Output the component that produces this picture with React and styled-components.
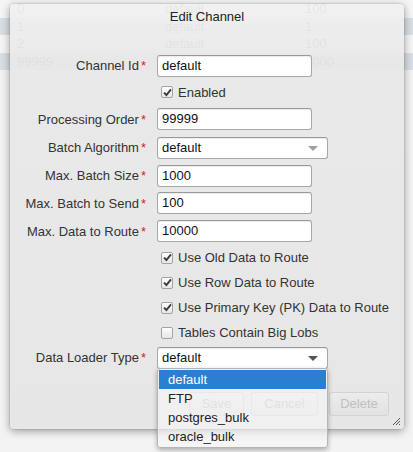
import React from "react";
import styled, { createGlobalStyle } from "styled-components";

const GlobalStyle = createGlobalStyle`
  html, body { margin: 0; padding: 0; background: #f3f3f3; }
  body { font-family: "Liberation Sans", Arial, sans-serif; font-size: 13px; color: #222; }
`;

const Page = styled.div`
  position: relative;
  width: 413px;
  height: 452px;
  overflow: hidden;
  background: #f3f3f3;
`;

const GridRow = styled.div`
  display: grid;
  grid-template-columns: 148px 140px 1fr;
  height: 17.5px;
  line-height: 17.5px;
  padding-left: 17px;
  color: #5a5a5a;
  background: ${(p) => (p.$striped ? "#d8dee4" : "#f5f5f5")};
`;

const Window = styled.div`
  position: absolute;
  left: 10px;
  top: 4px;
  width: 394px;
  height: 425px;
  border-radius: 4px;
  background: linear-gradient(
    to bottom,
    rgba(241, 241, 241, 0.935) 0px,
    rgba(232, 232, 232, 0.94) 60px,
    rgba(230, 230, 230, 0.95) 100%
  );
  box-shadow: 0 2px 9px rgba(0, 0, 0, 0.38), 0 0 0 1px rgba(0, 0, 0, 0.06);
  display: flex;
  flex-direction: column;
`;

const TitleBar = styled.div`
  height: 25px;
  line-height: 25px;
  text-align: center;
  color: #222;
  font-size: 13px;
`;

const Form = styled.div`
  padding-top: 23px;
  display: flex;
  flex-direction: column;
`;

const Row = styled.div`
  display: grid;
  grid-template-columns: 136px 1fr;
  column-gap: 11px;
  align-items: center;
  height: ${(p) => p.$h}px;
`;

const Label = styled.div`
  text-align: right;
  color: #333;
  white-space: nowrap;
`;

const Required = styled.span`
  color: #e01b1b;
  margin-left: 2px;
`;

const TextBox = styled.div`
  box-sizing: border-box;
  width: ${(p) => p.$w}px;
  height: 22px;
  line-height: 20px;
  padding: 0 4px;
  background: #fff;
  border: 1px solid #a8a8a8;
  border-top-color: #999;
  border-radius: 3px;
  box-shadow: inset 0 1px 1px rgba(0, 0, 0, 0.08);
  color: #111;
  position: relative;
`;

const Arrow = styled.span`
  position: absolute;
  right: 9px;
  top: 8px;
  width: 0;
  height: 0;
  border-left: 5px solid transparent;
  border-right: 5px solid transparent;
  border-top: 5px solid ${(p) => (p.$dark ? "#555" : "#a0a0a0")};
`;

const CheckRow = styled.div`
  display: flex;
  align-items: center;
  gap: 5px;
  padding-left: 4px;
  color: #333;
  white-space: nowrap;
`;

const Box = styled.span`
  box-sizing: border-box;
  width: 12px;
  height: 12px;
  border: 1px solid #a3a3a3;
  border-radius: 2px;
  background: linear-gradient(#fdfdfd, #e6e6e6);
  display: flex;
  align-items: center;
  justify-content: center;
`;

const Buttons = styled.div`
  display: flex;
  justify-content: flex-end;
  align-items: center;
  margin-top: 22px;
  padding-right: 15px;
`;

const Button = styled.div`
  box-sizing: border-box;
  width: ${(p) => p.$w}px;
  height: 24px;
  margin-left: ${(p) => p.$gap}px;
  border: 1px solid #d3d3d3;
  border-radius: 3px;
  background: linear-gradient(#ececec, #e2e2e2);
  color: #c0c0c0;
  text-align: center;
  line-height: 22px;
`;

const Resize = styled.svg`
  position: absolute;
  right: 3px;
  bottom: 3px;
`;

const DropList = styled.div`
  position: absolute;
  left: 157px;
  top: 368px;
  width: 171px;
  box-sizing: border-box;
  padding: 1px;
  background: rgba(246, 246, 246, 0.62);
  border: 1px solid #b5b5b5;
  border-radius: 3px;
  box-shadow: 0 2px 5px rgba(0, 0, 0, 0.3);
`;

const Item = styled.div`
  height: 19px;
  line-height: 19px;
  padding-left: 9px;
  color: ${(p) => (p.$active ? "#fff" : "#222")};
  background: ${(p) => (p.$active ? "#2c7ed1" : "transparent")};
`;

function Check({ checked }) {
  return (
    <Box>
      {checked && (
        <svg width="9" height="9" viewBox="0 0 9 9">
          <path d="M1 4.6 L3.4 7 L8 1.4" fill="none" stroke="#3a3a3a" strokeWidth="1.9" />
        </svg>
      )}
    </Box>
  );
}

const gridData = [
  ["0", "default", "100"],
  ["1", "default", "1"],
  ["2", "default", "100"],
  ["99999", "default", "1000"],
];

export default function App() {
  return (
    <Page>
      <GlobalStyle />
      {gridData.map((r, i) => (
        <GridRow key={i} $striped={i % 2 === 1}>
          <span>{r[0]}</span>
          <span>{r[1]}</span>
          <span>{r[2]}</span>
        </GridRow>
      ))}
      <Window>
        <TitleBar>Edit Channel</TitleBar>
        <Form>
          <Row $h={27}>
            <Label>Channel Id<Required>*</Required></Label>
            <TextBox $w={155}>default</TextBox>
          </Row>
          <Row $h={26}>
            <span />
            <CheckRow><Check checked />Enabled</CheckRow>
          </Row>
          <Row $h={28}>
            <Label>Processing Order<Required>*</Required></Label>
            <TextBox $w={155}>99999</TextBox>
          </Row>
          <Row $h={29}>
            <Label>Batch Algorithm<Required>*</Required></Label>
            <TextBox $w={171}>default<Arrow /></TextBox>
          </Row>
          <Row $h={27}>
            <Label>Max. Batch Size<Required>*</Required></Label>
            <TextBox $w={155}>1000</TextBox>
          </Row>
          <Row $h={28}>
            <Label>Max. Batch to Send<Required>*</Required></Label>
            <TextBox $w={155}>100</TextBox>
          </Row>
          <Row $h={28}>
            <Label>Max. Data to Route<Required>*</Required></Label>
            <TextBox $w={155}>10000</TextBox>
          </Row>
          <Row $h={25}>
            <span />
            <CheckRow><Check checked />Use Old Data to Route</CheckRow>
          </Row>
          <Row $h={25}>
            <span />
            <CheckRow><Check checked />Use Row Data to Route</CheckRow>
          </Row>
          <Row $h={25}>
            <span />
            <CheckRow><Check checked />Use Primary Key (PK) Data to Route</CheckRow>
          </Row>
          <Row $h={25}>
            <span />
            <CheckRow><Check />Tables Contain Big Lobs</CheckRow>
          </Row>
          <Row $h={25}>
            <Label>Data Loader Type<Required>*</Required></Label>
            <TextBox $w={171}>default<Arrow $dark /></TextBox>
          </Row>
        </Form>
        <Buttons>
          <Button $w={55} $gap={0}>Save</Button>
          <Button $w={67} $gap={7}>Cancel</Button>
          <Button $w={60} $gap={11}>Delete</Button>
        </Buttons>
        <Resize width="9" height="9" viewBox="0 0 9 9">
          <path d="M1 8 L8 1 M4 8 L8 4 M7 8 L8 7" stroke="#555" strokeWidth="1" fill="none" />
        </Resize>
      </Window>
      <DropList>
        <Item $active>default</Item>
        <Item>FTP</Item>
        <Item>postgres_bulk</Item>
        <Item>oracle_bulk</Item>
      </DropList>
    </Page>
  );
}
